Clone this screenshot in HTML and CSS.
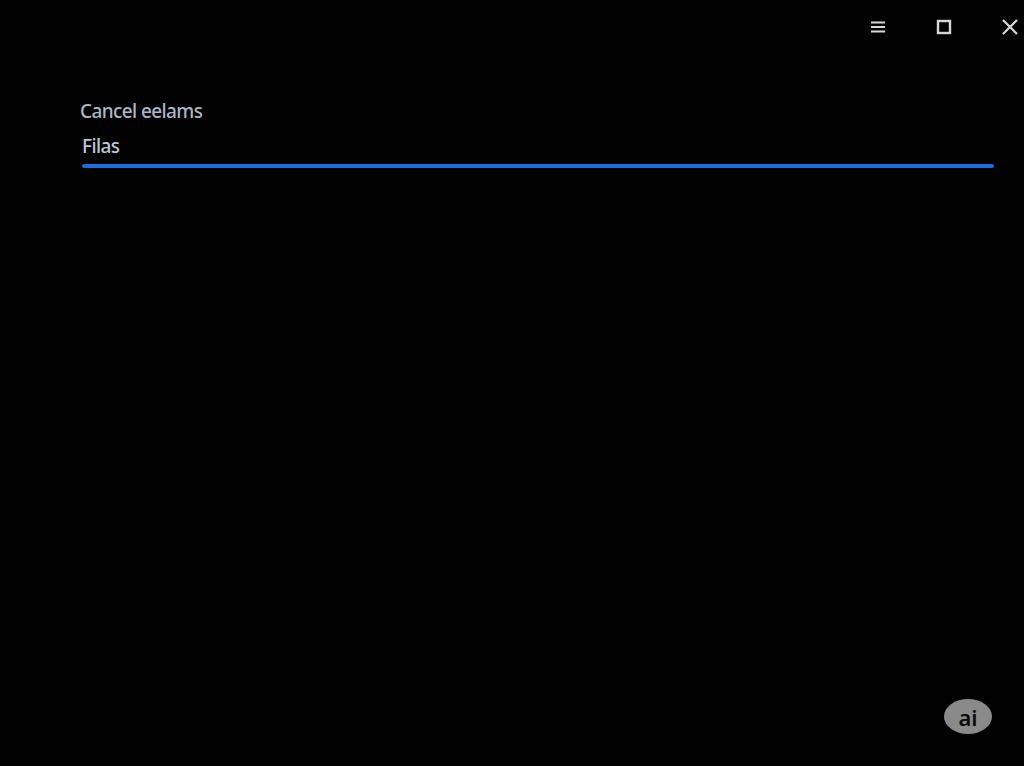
FILE: index.html
```html
<!DOCTYPE html>
<html lang='en'>
<head>
    <meta charset='UTF-8'>
    <meta name='viewport' content='width=device-width, initial-scale=1.0'>
    <title>Files</title>
    <link rel="stylesheet" href="styles.css">
</head>
<body>
    <div class="titlebar">
        <button class="win_button" aria-label="Menu">
            <svg width="16" height="14" viewBox="0 0 16 14">
                <path d="M1 2.5h14M1 7h14M1 11.5h14" stroke="#d8d8d8" stroke-width="2.2"/>
            </svg>
        </button>
        <button class="win_button" aria-label="Maximize">
            <svg width="16" height="16" viewBox="0 0 16 16">
                <rect x="2" y="2" width="12" height="12" fill="none" stroke="#d8d8d8" stroke-width="2.4"/>
            </svg>
        </button>
        <button class="win_button" aria-label="Close">
            <svg width="18" height="18" viewBox="0 0 18 18">
                <path d="M2 2L16 16M16 2L2 16" stroke="#d8d8d8" stroke-width="2.2"/>
            </svg>
        </button>
    </div>

    <div class="content">
        <span class="caption">Cancel eelams</span>
        <span class="field_label">Filas</span>
        <div class="underline"></div>
    </div>

    <span class="badge">ai</span>
</body>
</html>
```

FILE: styles.css
```css
html, body
{
    height: 100%;
}
body
{
    margin: 0;
    background: #020202;
    font-family: 'Noto Sans', sans-serif;
    overflow: hidden;
}
.titlebar
{
    display: flex;
    justify-content: flex-end;
    gap: 38px;
    padding: 16px 0 0 0;
}
.win_button
{
    width: 28px;
    height: 22px;
    padding: 0;
    border: none;
    background: none;
    display: flex;
    align-items: center;
    justify-content: center;
}
.content
{
    display: flex;
    flex-direction: column;
    align-items: flex-start;
    margin: 61px 30px 0 80px;
}
.caption
{
    color: #a9b9c9;
    font-size: 19px;
    font-weight: 500;
    letter-spacing: -0.6px;
    line-height: 24px;
}
.field_label
{
    color: #bccad8;
    font-size: 19px;
    font-weight: 500;
    letter-spacing: -0.6px;
    line-height: 24px;
    margin: 11px 0 0 2px;
}
.underline
{
    align-self: stretch;
    height: 4px;
    margin: 6px 0 0 2px;
    border-radius: 2px;
    background: #1a6fdc;
}
.badge
{
    position: absolute;
    left: 944px;
    top: 699px;
    width: 48px;
    height: 35px;
    border-radius: 50%;
    background: #8a8a8a;
    color: #0c0c0c;
    font-family: 'Noto Sans', sans-serif;
    font-size: 22px;
    font-weight: 600;
    line-height: 1;
    display: flex;
    align-items: center;
    justify-content: center;
}
```
